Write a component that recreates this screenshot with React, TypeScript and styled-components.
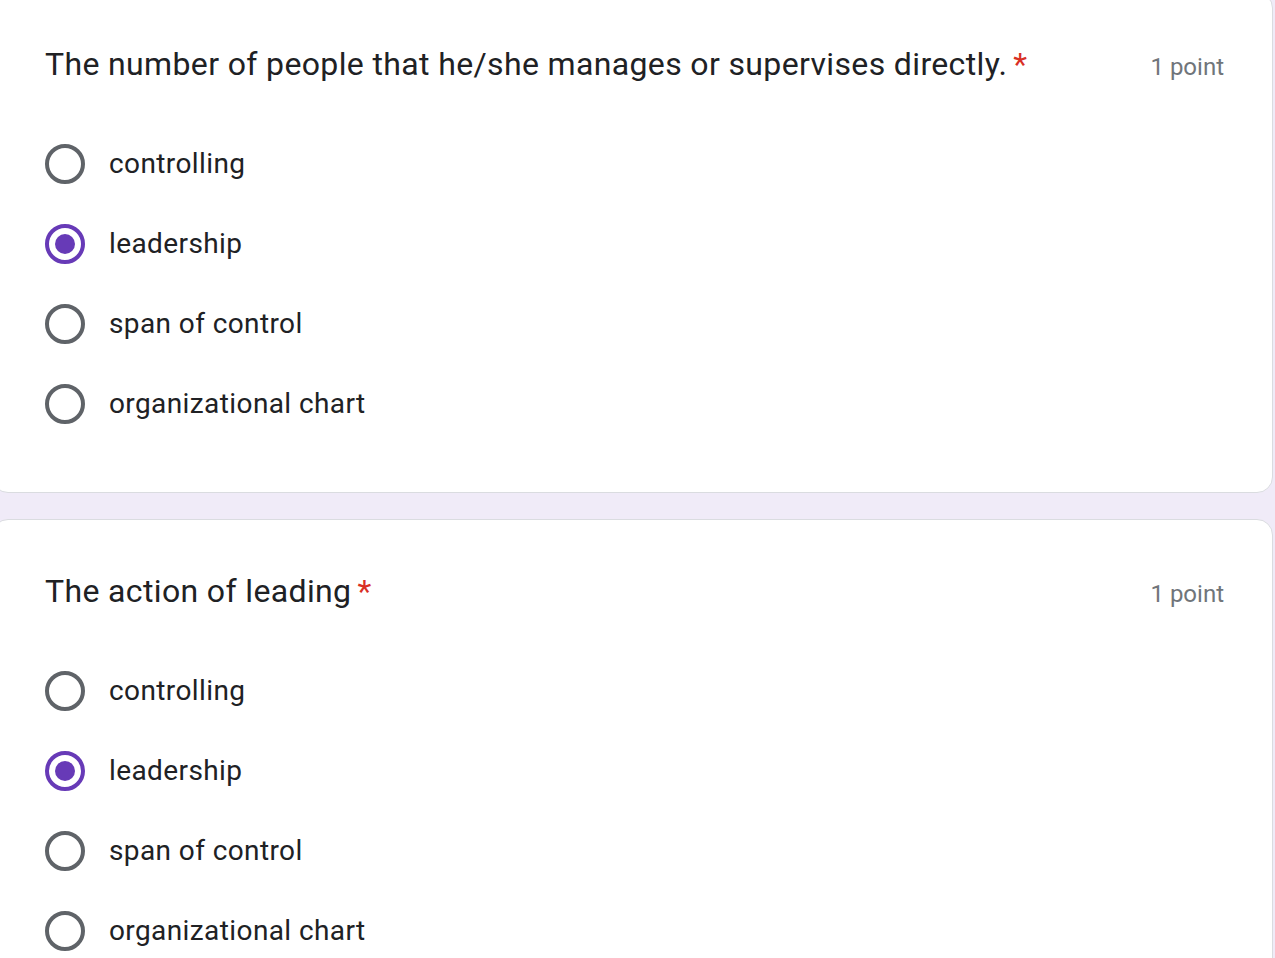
import React from "react";
import styled, { createGlobalStyle } from "styled-components";

const GlobalStyle = createGlobalStyle`
  html, body {
    margin: 0;
    padding: 0;
    background: #f0ebf8;
    overflow: hidden;
  }
  body {
    font-family: Roboto, "Liberation Sans", sans-serif;
  }
`;

const Page = styled.main`
  display: flex;
  flex-direction: column;
  gap: 26px;
  margin: -8px 2px 0 -8px;
`;

const Card = styled.section`
  background: #ffffff;
  border: 1px solid #dadce0;
  border-radius: 16px;
  padding: 47px 48px 48px 52px;
`;

const Header = styled.div`
  display: flex;
  justify-content: space-between;
  align-items: baseline;
`;

const Title = styled.h2`
  margin: 0;
  font-family: Roboto, "Liberation Sans", sans-serif;
  font-weight: 400;
  font-size: 32px;
  line-height: 48px;
  color: #202124;
  letter-spacing: 0.36px;
`;

const Required = styled.span`
  color: #d93025;
  padding-left: 6px;
`;

const Points = styled.span`
  font-size: 24px;
  color: #70757a;
  letter-spacing: 0;
`;

const Options = styled.div`
  display: flex;
  flex-direction: column;
  margin-top: 36px;
`;

const OptionRow = styled.label`
  display: flex;
  align-items: center;
  gap: 24px;
  height: 80px;
  cursor: pointer;
`;

const Radio = styled.span<{ $checked: boolean }>`
  box-sizing: border-box;
  width: 40px;
  height: 40px;
  border-radius: 50%;
  border: 4px solid ${(p) => (p.$checked ? "#673ab7" : "#5f6368")};
  display: flex;
  align-items: center;
  justify-content: center;
  flex-shrink: 0;

  &::after {
    content: "";
    width: 20px;
    height: 20px;
    border-radius: 50%;
    background: #673ab7;
    display: ${(p) => (p.$checked ? "block" : "none")};
  }
`;

const OptionText = styled.span`
  font-size: 28px;
  line-height: 38px;
  color: #202124;
  letter-spacing: 0.4px;
`;

type Question = {
  title: string;
  options: string[];
  selected: number;
};

const questions: Question[] = [
  {
    title: "The number of people that he/she manages or supervises directly.",
    options: ["controlling", "leadership", "span of control", "organizational chart"],
    selected: 1,
  },
  {
    title: "The action of leading",
    options: ["controlling", "leadership", "span of control", "organizational chart"],
    selected: 1,
  },
];

export default function App() {
  return (
    <>
      <GlobalStyle />
      <Page>
        {questions.map((q, qi) => (
          <Card key={qi}>
            <Header>
              <Title>
                {q.title}
                <Required>*</Required>
              </Title>
              <Points>1 point</Points>
            </Header>
            <Options>
              {q.options.map((o, oi) => (
                <OptionRow key={oi}>
                  <Radio $checked={oi === q.selected} />
                  <OptionText>{o}</OptionText>
                </OptionRow>
              ))}
            </Options>
          </Card>
        ))}
      </Page>
    </>
  );
}
